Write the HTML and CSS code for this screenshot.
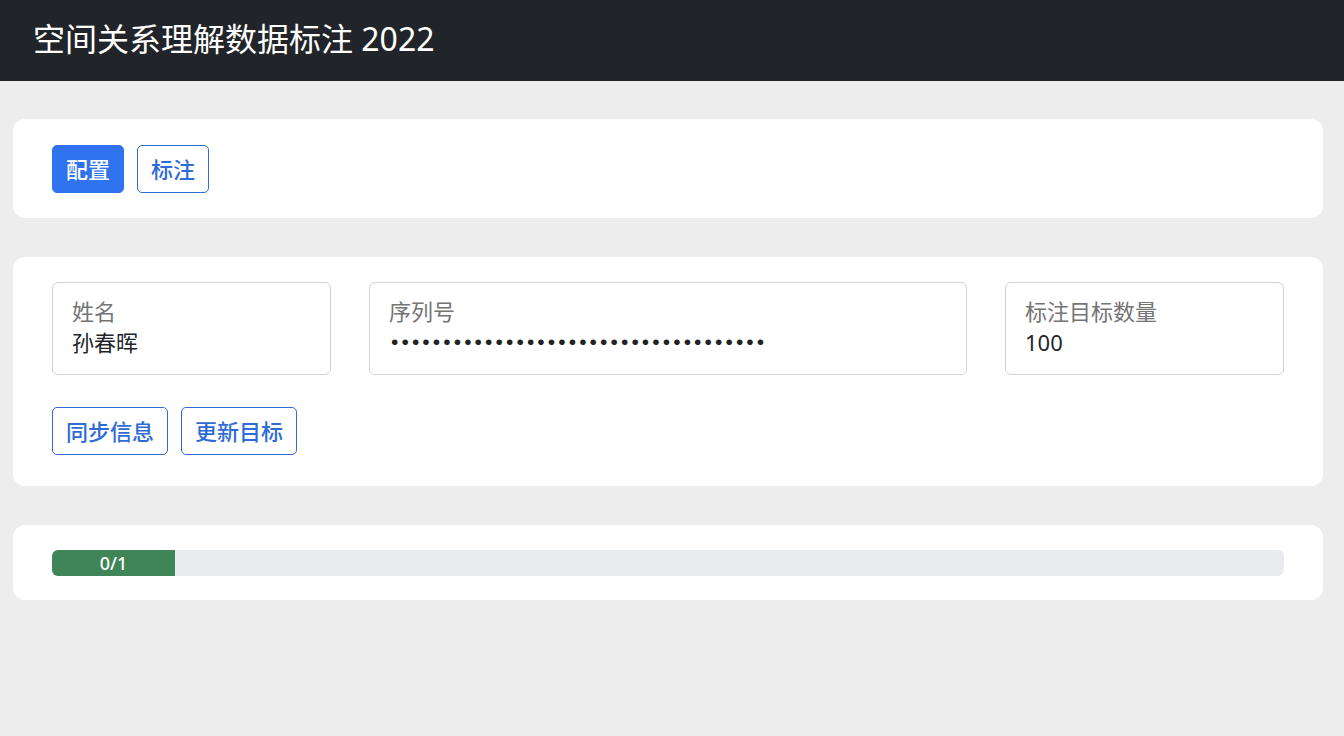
FILE: index.html
```html
<!DOCTYPE html>
<html lang="zh-CN">
<head>
<meta charset="utf-8">
<title>空间关系理解数据标注 2022</title>
<link rel="stylesheet" href="styles.css">
</head>
<body>
<header class="topbar">
  <h1 class="title">空间关系理解数据标注 2022</h1>
</header>
<main class="content">
  <section class="card card-tabs">
    <div class="btn-row">
      <button class="btn btn-primary">配置</button>
      <button class="btn btn-outline">标注</button>
    </div>
  </section>
  <section class="card card-config">
    <div class="fields">
      <div class="field">
        <div class="field-label">姓名</div>
        <div class="field-value">孙春晖</div>
      </div>
      <div class="field">
        <div class="field-label">序列号</div>
        <div class="field-value dots">••••••••••••••••••••••••••••••••••••</div>
      </div>
      <div class="field">
        <div class="field-label">标注目标数量</div>
        <div class="field-value">100</div>
      </div>
    </div>
    <div class="btn-row">
      <button class="btn btn-outline">同步信息</button>
      <button class="btn btn-outline">更新目标</button>
    </div>
  </section>
  <section class="card card-progress">
    <div class="progress">
      <div class="progress-bar" style="width: 10%">0/1</div>
    </div>
  </section>
</main>
</body>
</html>
```
FILE: styles.css
```css
html, body {
  margin: 0;
  padding: 0;
}
body {
  background: #ededed;
  font-family: "Noto Sans", "Noto Sans CJK SC", sans-serif;
  color: #212529;
}
.topbar {
  height: 81px;
  background: #212529;
  display: flex;
  align-items: center;
  padding: 0 33px;
  box-sizing: border-box;
}
.title {
  margin: 0;
  font-size: 32px;
  line-height: 40px;
  font-weight: 400;
  color: #ffffff;
  position: relative;
  top: -2px;
}
.content {
  padding: 38px 21px 39px 13px;
  display: flex;
  flex-direction: column;
  gap: 39px;
}
.card {
  background: #ffffff;
  border-radius: 12px;
  padding: 26px 39px 25px;
}
.card-config {
  padding: 25px 39px 31px;
  display: flex;
  flex-direction: column;
  gap: 32px;
}
.card-progress {
  padding: 25px 39px 24px;
}
.btn-row {
  display: flex;
  gap: 13px;
}
.btn {
  font-family: "Noto Sans", "Noto Sans CJK SC", sans-serif;
  font-size: 22px;
  line-height: 30px;
  font-weight: 500;
  padding: 8px 13px;
  border-radius: 5px;
  border: 1px solid #2f6bd6;
  background: #ffffff;
  color: #2f6bd6;
  cursor: pointer;
}
.btn-primary {
  background: #3172ee;
  border-color: #3172ee;
  color: #ffffff;
}
.fields {
  display: grid;
  grid-template-columns: 279px 1fr 279px;
  gap: 38px;
}
.field {
  border: 1px solid #d3d3d3;
  border-radius: 6px;
  padding: 13px 19px 17px;
  height: 93px;
  box-sizing: border-box;
}
.field-label {
  font-size: 22px;
  line-height: 30px;
  color: #747474;
}
.field-value {
  font-size: 22px;
  line-height: 32px;
  color: #212529;
}
.dots {
  font-family: "Liberation Sans", sans-serif;
  font-size: 21px;
  letter-spacing: 3.1px;
  color: #222;
  padding-left: 2px;
}
.progress {
  height: 26px;
  background: #e9ecef;
  border-radius: 6px;
  overflow: hidden;
  display: flex;
}
.progress-bar {
  background: #3f8558;
  color: #ffffff;
  font-size: 18px;
  line-height: 26px;
  text-align: center;
  font-weight: 500;
}
```
